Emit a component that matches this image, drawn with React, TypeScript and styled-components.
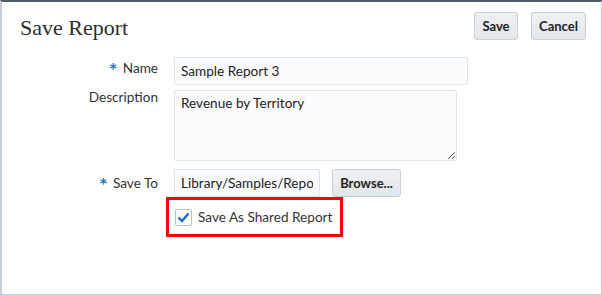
import React from "react";
import styled, { createGlobalStyle } from "styled-components";

const Global = createGlobalStyle`
  html, body { margin: 0; padding: 0; background: #fff; }
  * { box-sizing: border-box; }
`;

const FONT = `"Lato", "Open Sans", sans-serif`;

const Dialog = styled.div`
  width: 602px;
  height: 295px;
  border: 1px solid #c3ccd5;
  border-left-width: 2px;
  border-top: 2px solid #4f5b66;
  background: #fff;
  font-family: ${FONT};
  font-size: 13.6px;
  color: #333;
`;

const Header = styled.div`
  display: flex;
  align-items: flex-start;
  justify-content: space-between;
  padding: 10px 15px 0 18px;
  height: 55px;
`;

const Title = styled.h1`
  margin: 0;
  padding-top: 3px;
  font-family: "Liberation Serif", "DejaVu Serif", serif;
  font-weight: normal;
  font-size: 22px;
  color: #2d2d2d;
`;

const Actions = styled.div`
  display: flex;
  gap: 13px;
`;

const Button = styled.button<{ $w: number }>`
  width: ${(p) => p.$w}px;
  height: 28px;
  padding: 0;
  border: 1px solid #c6ced6;
  border-radius: 3px;
  background: linear-gradient(#eef1f4, #e2e7eb);
  font-family: ${FONT};
  font-weight: bold;
  font-size: 13px;
  color: #222;
`;

const Form = styled.div`
  display: grid;
  grid-template-columns: 156px auto;
  column-gap: 16px;
  align-items: start;
`;

const Label = styled.label<{ $top?: number }>`
  justify-self: end;
  padding-top: ${(p) => p.$top ?? 5}px;
  white-space: nowrap;
  color: #333;
`;

const Star = styled.span`
  color: #1e6fb8;
  font-family: "DejaVu Sans", sans-serif;
  font-weight: bold;
  font-size: 14px;
  margin-right: 6px;
`;

const Field = styled.input<{ $w: number }>`
  width: ${(p) => p.$w}px;
  height: 28px;
  padding: 0 6px;
  border: 1px solid #dfe4e8;
  border-radius: 2px;
  background: #fbfcfe;
  font-family: ${FONT};
  font-size: 13.6px;
  color: #222;
  outline: none;
`;

const Area = styled.textarea`
  width: 283px;
  height: 71px;
  margin-top: 5px;
  padding: 4px 6px;
  border: 1px solid #dfe4e8;
  border-radius: 2px;
  background: #fbfcfe;
  font-family: ${FONT};
  font-size: 13.6px;
  color: #222;
  resize: vertical;
  outline: none;
`;

const Row = styled.div`
  display: flex;
  gap: 12px;
  margin-top: 8px;
`;

const Highlight = styled.div`
  margin-left: -8px;
  width: 177px;
  height: 40px;
  border: 3px solid #ff0000;
  display: flex;
  align-items: center;
  gap: 6px;
  padding-left: 6px;
`;

const Check = styled.span`
  width: 17px;
  height: 17px;
  border: 1px solid #b8c2cc;
  border-radius: 2px;
  background: #fbfcfe;
  display: flex;
  align-items: center;
  justify-content: center;
`;

export default function App() {
  return (
    <>
      <Global />
      <Dialog>
        <Header>
          <Title>Save Report</Title>
          <Actions>
            <Button $w={44}>Save</Button>
            <Button $w={55}>Cancel</Button>
          </Actions>
        </Header>
        <Form>
          <Label $top={3}><Star>*</Star>Name</Label>
          <Field $w={294} readOnly value="Sample Report 3" />
          <Label $top={4}>Description</Label>
          <Area readOnly value="Revenue by Territory" />
          <Label $top={14}><Star>*</Star>Save To</Label>
          <Row>
            <Field $w={146} readOnly value="Library/Samples/Reports" />
            <Button $w={69}>Browse...</Button>
          </Row>
          <span />
          <Highlight>
            <Check>
              <svg width="13" height="11" viewBox="0 0 13 11">
                <path d="M1.5 5.5 L5 9 L11.5 1.5" fill="none" stroke="#1c6ec2" strokeWidth="2.4" />
              </svg>
            </Check>
            <span>Save As Shared Report</span>
          </Highlight>
        </Form>
      </Dialog>
    </>
  );
}
